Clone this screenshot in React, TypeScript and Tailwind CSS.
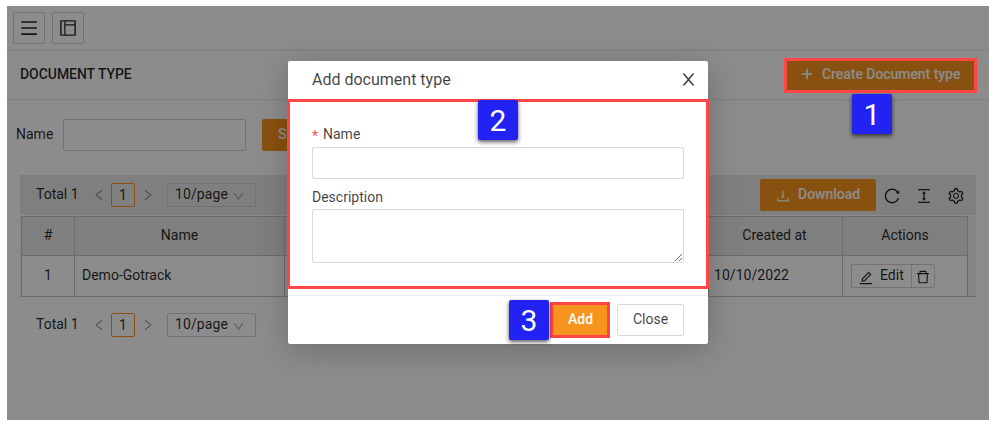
import type { ReactNode } from "react";
import {
  AiOutlineMenu,
  AiOutlineLayout,
  AiOutlinePlus,
  AiOutlineLeft,
  AiOutlineRight,
  AiOutlineDown,
  AiOutlineDownload,
  AiOutlineReload,
  AiOutlineColumnHeight,
  AiOutlineSetting,
  AiOutlineEdit,
  AiOutlineDelete,
} from "react-icons/ai";

function IconButton({ children }: { children: ReactNode }) {
  return (
    <button className="flex h-8 w-8 items-center justify-center rounded-xs border border-[#d0d0d0] text-[20px]">
      {children}
    </button>
  );
}

function Pagination() {
  return (
    <div className="flex h-6 items-center">
      <span className="w-[55px] pb-0.5">Total 1</span>
      <span className="flex w-5 justify-start pl-px text-[14px] text-black/40">
        <AiOutlineLeft />
      </span>
      <span className="flex h-6 w-6 items-center justify-center rounded-xs border border-[#f7941d] pt-px">1</span>
      <span className="flex w-8 pl-[6px] text-[14px] text-black/40">
        <AiOutlineRight />
      </span>
      <span className="flex h-6 w-[89px] items-center justify-between rounded-xs border border-[#cfcfcf] pr-2.5 pl-[7px]">
        <span className="pb-0.5 tracking-[0.1px]">10/page</span>
        <AiOutlineDown className="mt-0.5 text-[13px] text-black/35" />
      </span>
    </div>
  );
}

function Step({ n, place }: { n: number; place: string }) {
  return (
    <div
      className={`absolute flex h-10 w-10 items-center justify-center rounded-[2px] bg-[#2222f2] pt-0.5 text-[30px] leading-none text-white shadow-[0_2px_4px_rgba(0,0,0,0.65)] ${place}`}
    >
      {n}
    </div>
  );
}

function DocumentPage() {
  return (
    <div className="h-full bg-white">
      <header className="flex h-[45px] items-start gap-[7px] border-b-2 border-[#f0f0f0] pt-1.5 pl-1.5">
        <IconButton>
          <AiOutlineMenu />
        </IconButton>
        <IconButton>
          <AiOutlineLayout />
        </IconButton>
      </header>
      <div className="flex h-[49px] items-center justify-between border-b border-[#ebebeb] pr-[13px] pb-0.5 pl-[13px]">
        <h1 className="font-medium tracking-[-0.05px]">DOCUMENT TYPE</h1>
        <button className="flex h-8 w-[191px] items-center gap-2 rounded-xs bg-[#f7941d] pl-[15px] font-medium text-white">
          <AiOutlinePlus className="text-[14px]" strokeWidth={50} />
          <span className="tracking-[-0.05px]">Create Document type</span>
        </button>
      </div>
      <div className="flex h-[75px] items-start pt-[19px] pl-[9px]">
        <span className="w-[47px] leading-[30px]">Name</span>
        <span className="h-8 w-[183px] rounded-xs border border-[#cfcfcf]" />
        <button className="ml-4 h-8 w-20 rounded-xs bg-[#f7941d] pb-0.5 pl-4 text-left font-medium text-white">
          Search
        </button>
      </div>
      <div className="mr-[13px] ml-[13px]">
        <div className="flex h-10 items-center justify-between bg-[#e8e8e8] pl-4">
          <Pagination />
          <div className="flex items-center gap-3.5 pr-[11px] text-[18px]">
            <button className="flex h-8 w-[116px] items-center gap-[7px] rounded-xs bg-[#f7941d] pl-[15px] text-[14px] font-medium text-white">
              <AiOutlineDownload className="mt-0.5 text-[16px]" />
              <span className="pb-0.5">Download</span>
            </button>
            <AiOutlineReload className="mt-0.5 -ml-[7px]" />
            <AiOutlineColumnHeight className="mt-0.5" />
            <AiOutlineSetting className="mt-0.5" />
          </div>
        </div>
        <div className="mt-px border-b border-[#c4c4c4] bg-[#f0f0f0] pl-px">
          <div className="grid h-20 w-[947px] grid-cols-[53px_210px_424px_134px_125px] grid-rows-[39px_40px] border-t border-l border-[#c4c4c4] bg-white *:flex *:items-center *:border-r *:border-[#c4c4c4] *:pb-0.5 [&>*:nth-child(-n+5)]:justify-center [&>*:nth-child(-n+5)]:border-b [&>*:nth-child(-n+5)]:bg-[#e8e8e8]">
            <div>#</div>
            <div>Name</div>
            <div>Description</div>
            <div className="pr-0.5">Created at</div>
            <div>Actions</div>
            <div className="justify-center">1</div>
            <div className="pl-[7px]">Demo-Gotrack</div>
            <div />
            <div className="pl-[5px] tracking-[0.05px]">10/10/2022</div>
            <div className="pl-2">
              <span className="mt-0.5 flex h-6 w-[61px] items-center gap-[6px] rounded-l-xs border border-[#cfcfcf] pl-[6px]">
                <AiOutlineEdit className="mt-1 text-[16px]" />
                <span className="pb-0.5">Edit</span>
              </span>
              <span className="mt-0.5 -ml-px flex h-6 w-6 items-center justify-center rounded-r-xs border border-[#cfcfcf] pt-0.5">
                <AiOutlineDelete className="shrink-0 text-[16px]" />
              </span>
            </div>
          </div>
        </div>
        <div className="pt-4 pl-4">
          <Pagination />
        </div>
      </div>
    </div>
  );
}

function CloseIcon() {
  return (
    <svg viewBox="0 0 1024 1024" className="h-[19px] w-[19px]" fill="currentColor">
      <path d="M563.8 512l262.5-312.9c4.4-5.2.7-13.1-6.1-13.1h-79.8c-4.7 0-9.2 2.1-12.3 5.7L511.6 449.8 295.1 191.7c-3-3.6-7.5-5.7-12.3-5.7H203c-6.8 0-10.5 7.9-6.1 13.1L459.4 512 196.9 824.9A7.95 7.95 0 0 0 203 838h79.8c4.7 0 9.2-2.1 12.3-5.7l216.5-258.1 216.5 258.1c3 3.6 7.5 5.7 12.3 5.7h79.8c6.8 0 10.5-7.9 6.1-13.1L563.8 512z" />
    </svg>
  );
}

function Dialog() {
  return (
    <section className="absolute top-[55px] left-[281px] flex h-[283px] w-[420px] flex-col rounded-xs bg-white text-black/75 shadow-[0_6px_32px_rgba(0,0,0,0.22)]">
      <header className="flex h-[38px] shrink-0 items-center justify-between pr-[10.5px] pb-px pl-6 text-[16px]">
        <h2 className="pt-px">Add document type</h2>
        <CloseIcon />
      </header>
      <div className="flex h-[197px] shrink-0 flex-col border-b border-[#f0f0f0] px-6 pt-6">
        <label className="flex h-6 items-start leading-[22px]">
          <span className="w-[11px] pt-0.5 text-[#ff4d4f]">*</span>
          <span>Name</span>
        </label>
        <input className="h-8 w-full rounded-xs border border-[#d9d9d9]" />
        <label className="flex h-[30px] items-center pt-1.5">Description</label>
        <textarea className="h-[54px] w-full shrink-0 resize-y rounded-xs border border-[#d9d9d9]" />
      </div>
      <footer className="flex grow items-center justify-end gap-2 pr-6">
        <button className="h-8 w-[57px] bg-[#f7941d] pb-0.5 font-medium text-white">Add</button>
        <button className="h-8 w-[67px] rounded-xs border border-[#d9d9d9] pb-0.5">Close</button>
      </footer>
    </section>
  );
}

export default function App() {
  return (
    <div className="h-[426px] w-[998px] bg-white pt-1.5 pl-[7px] font-[Roboto,sans-serif] text-[14px] text-black/85">
      <main className="relative h-[414px] w-[982px]">
        <DocumentPage />
        <div className="absolute inset-0 bg-black/45" />
        <Dialog />
        <div className="absolute top-[52px] left-[777px] h-[35px] w-[193px] border-3 border-[#ff4545]" />
        <div className="absolute top-[93px] left-[280px] h-[190px] w-[422px] border-3 border-[#ff4545]" />
        <div className="absolute top-[296px] left-[543px] h-9 w-[60px] border-3 border-[#ff4545]" />
        <Step n={1} place="top-[88px] left-[845px]" />
        <Step n={2} place="top-[94px] left-[471px]" />
        <Step n={3} place="top-[294px] left-[502px]" />
      </main>
    </div>
  );
}
